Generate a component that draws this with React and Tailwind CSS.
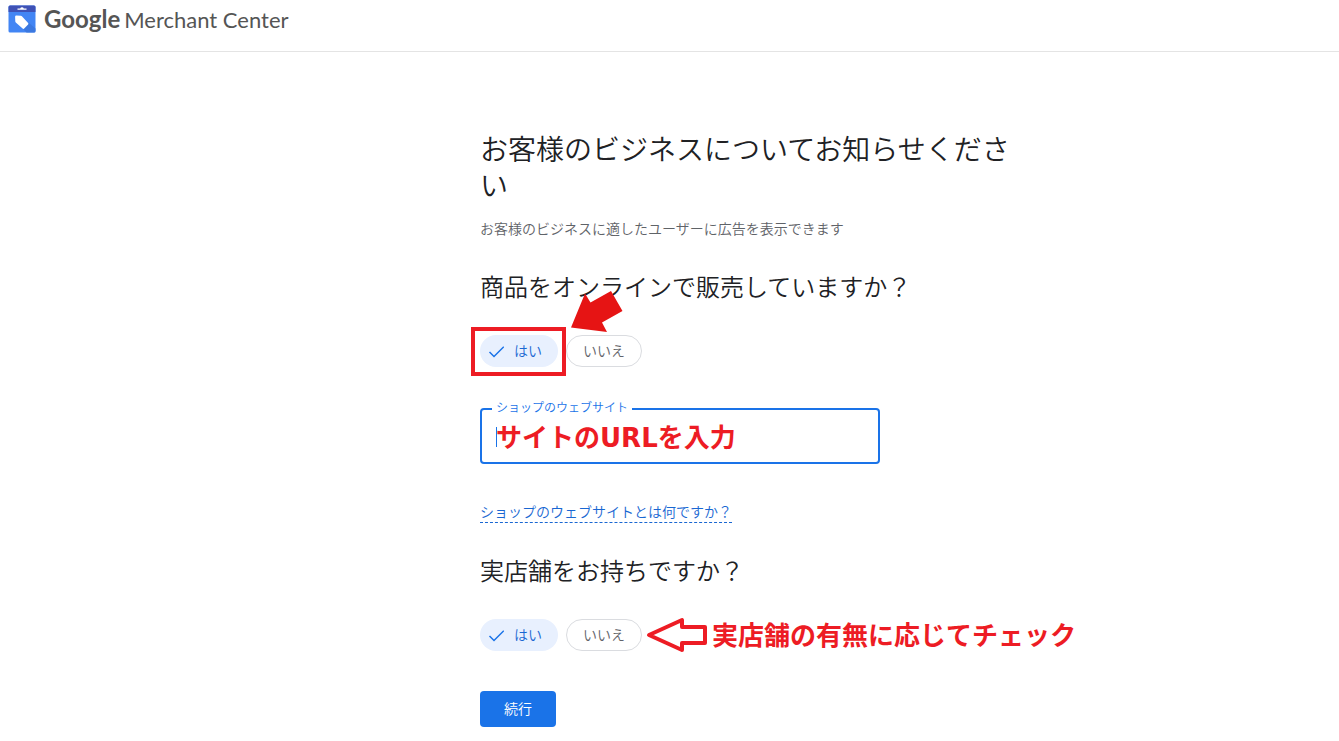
import { useState } from "react";

function MerchantLogo() {
  return (
    <svg className="h-7 w-7 shrink-0" viewBox="0 0 28 28" aria-hidden="true">
      <rect x="0.5" y="0.5" width="27" height="27" rx="1.5" fill="#4285f4" />
      <path d="M2 .5h24A1.500 1.500 0 0 1 27.500 2v5H.5V2A1.500 1.500 0 0 1 2 .5z" fill="#3f51b5" />
      <path d="M9.500 4.800V3.500h2.700a1.900 1.900 0 0 1 3.600 0h2.700v1.300z" fill="#fff" />
      <path d="M20.500 17.500l7 6V26a1.500 1.500 0 0 1-1.500 1.500h-7.500l-3-3z" fill="#3b78e0" />
      <path d="M8.300 10.500l4.600.3a1.600 1.600 0 0 1 1 .5l6.200 6.700a1.200 1.200 0 0 1 0 1.600l-3.900 4a1.200 1.200 0 0 1-1.600 0l-6.800-6.200a1.600 1.600 0 0 1-.5-1l-.2-4.700a1.200 1.200 0 0 1 1.200-1.200z" fill="#fff" />
    </svg>
  );
}

function CheckIcon() {
  return (
    <svg className="h-4 w-4 shrink-0" viewBox="0 0 16 16" fill="none" stroke="#1a73e8" strokeWidth="1.5" aria-hidden="true">
      <path d="M1.500 9l4.500 4.500L15.800 3.700" />
    </svg>
  );
}

function Chip({ name, label, checked, onSelect }) {
  return (
    <label
      className={
        checked
          ? "flex h-8 cursor-pointer items-center gap-2.5 rounded-full bg-[#e8f0fe] pr-4 pl-2 text-sm whitespace-nowrap text-[#1967d2]"
          : "flex h-8 cursor-pointer items-center rounded-full border border-[#dadce0] px-4 text-sm whitespace-nowrap text-[#5f6368]"
      }
    >
      <input type="radio" name={name} checked={checked} onChange={onSelect} className="sr-only" />
      {checked && <CheckIcon />}
      {label}
    </label>
  );
}

function YesNo({ name, legend }) {
  const [answer, setAnswer] = useState("はい");
  return (
    <div role="radiogroup" aria-label={legend} className="flex shrink-0 gap-2">
      {["はい", "いいえ"].map((label) => (
        <Chip key={label} name={name} label={label} checked={answer === label} onSelect={() => setAnswer(label)} />
      ))}
    </div>
  );
}

export default function App() {
  return (
    <div className="bg-white font-['Noto_Sans','Noto_Sans_CJK_JP',sans-serif] font-[350] text-[#202124]">
      <header className="flex h-[52px] items-start gap-2 border-b border-[#e4e4e4] px-2 pt-[5px]">
        <MerchantLogo />
        <div className="flex items-baseline gap-1 font-['Lato',sans-serif] text-[22px] leading-7 font-normal whitespace-nowrap text-[#555]">
          <b className="text-2xl leading-7">Google</b>
          <span>Merchant Center</span>
        </div>
      </header>

      <main className="px-6 pt-[79px] pb-3 lg:pl-[480px]">
        <div className="max-w-[540px]">
          <h1 className="text-[28px] leading-9">お客様のビジネスについてお知らせください</h1>
          <p className="mt-4 text-sm leading-5 text-[#5f6368]">お客様のビジネスに適したユーザーに広告を表示できます</p>

          <h2 className="mt-8 text-2xl leading-8">商品をオンラインで販売していますか？</h2>
          <div className="relative mt-8 flex">
            <YesNo name="online" legend="商品をオンラインで販売していますか？" />
            <div className="pointer-events-none absolute -top-2 -left-[9px] h-[49px] w-[95px] border-4 border-[#ed1c24]" />
            <svg className="pointer-events-none absolute -top-11 left-[91px] h-[42px] w-[53px]" viewBox="0 0 53 42" aria-hidden="true">
              <path d="M0 36.500L14 2.500l5.500 9L40 0l11.500 20L31 31.500 36 41z" fill="#e61414" />
            </svg>
          </div>

          <div className="relative mt-[41px] h-14 max-w-[400px]">
            <label htmlFor="site" className="absolute -top-2 left-3 bg-white px-1 text-xs leading-4 text-[#1a73e8]">
              ショップのウェブサイト
            </label>
            <span className="absolute top-[19px] left-4 h-5 w-px bg-[#1a73e8]" />
            <input
              id="site"
              type="url"
              placeholder="サイトのURLを入力"
              className="h-full w-full rounded border-2 border-[#1a73e8] px-3.5 pt-1 font-['DejaVu_Sans','Noto_Sans_CJK_JP',sans-serif] text-[26px] font-bold placeholder:text-[#ed1c24] placeholder:opacity-100"
            />
          </div>

          <a href="#website" className="mt-[38px] block w-fit border-b border-dashed border-[#1967d2] text-sm leading-5 text-[#1967d2]">
            ショップのウェブサイトとは何ですか？
          </a>

          <h2 className="mt-8 text-2xl leading-8">実店舗をお持ちですか？</h2>
          <div className="mt-8 flex h-8 items-center gap-1">
            <YesNo name="store" legend="実店舗をお持ちですか？" />
            <svg className="h-9 w-[62px] shrink-0" viewBox="0 0 62 36" fill="none" stroke="#ed1c24" strokeWidth="4" strokeLinejoin="round" aria-hidden="true">
              <path d="M3 18L36 3v7h23v16H36v7z" />
            </svg>
            <strong className="text-[26px] leading-8 font-bold whitespace-nowrap text-[#ed1c24]">実店舗の有無に応じてチェック</strong>
          </div>

          <button type="button" className="mt-10 h-9 rounded bg-[#1a73e8] px-6 text-sm text-white">
            続行
          </button>
        </div>
      </main>
    </div>
  );
}
